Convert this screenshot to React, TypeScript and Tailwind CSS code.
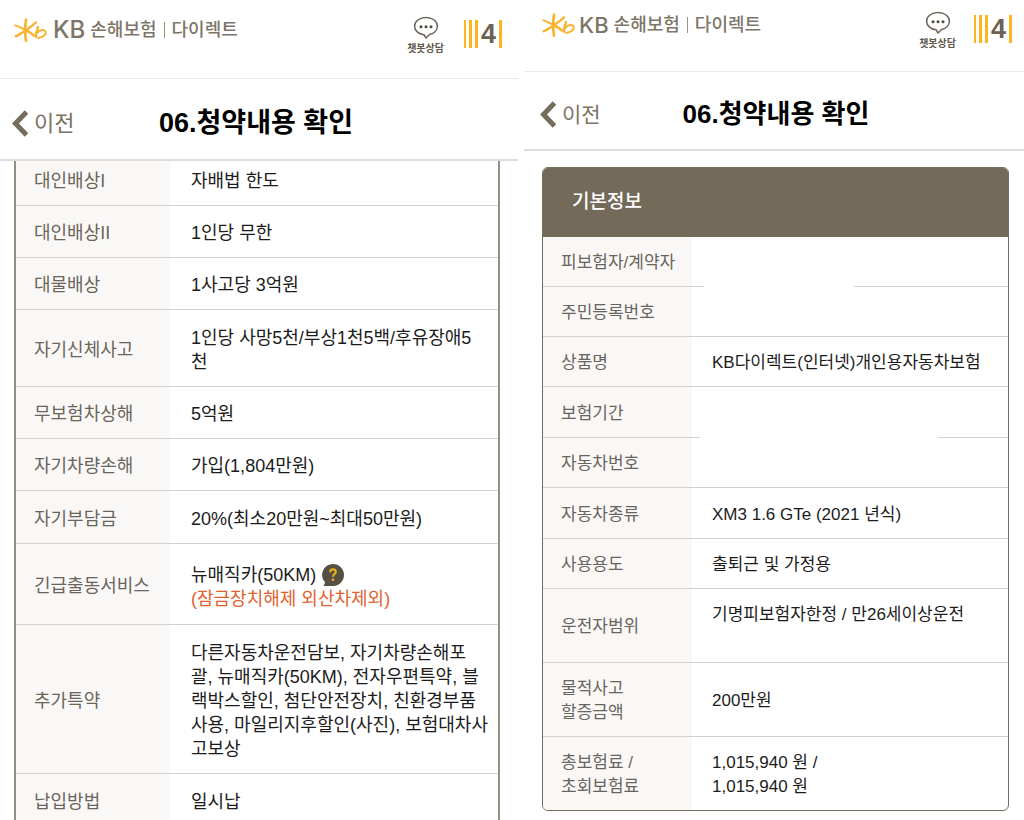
import React from 'react';
import clsx from 'clsx';

interface Row {
  label: React.ReactNode;
  value?: React.ReactNode;
  height: string;
  valueClass?: string;
  mask?: string;
}

const coverageRows: Row[] = [
  { label: '대인배상I', value: '자배법 한도', height: 'h-[52px]' },
  { label: '대인배상II', value: '1인당 무한', height: 'h-[52px]' },
  { label: '대물배상', value: '1사고당 3억원', height: 'h-[52px]' },
  {
    label: '자기신체사고',
    value: (
      <>
        1인당 사망5천/부상1천5백/후유장애5
        <br />천
      </>
    ),
    height: 'h-[77px]',
  },
  { label: '무보험차상해', value: '5억원', height: 'h-[52px]' },
  { label: '자기차량손해', value: '가입(1,804만원)', height: 'h-[52px]' },
  { label: '자기부담금', value: '20%(최소20만원~최대50만원)', height: 'h-[53px]' },
  {
    label: '긴급출동서비스',
    value: (
      <>
        <span className="flex items-center gap-1.5">
          뉴매직카(50KM)
          <HelpButton />
        </span>
        <span className="text-[#e2622f]">(잠금장치해제 외산차제외)</span>
      </>
    ),
    height: 'h-[81px]',
    valueClass: 'pt-1.5',
  },
  {
    label: '추가특약',
    value: (
      <>
        다른자동차운전담보, 자기차량손해포
        <br />
        괄, 뉴매직카(50KM), 전자우편특약, 블
        <br />
        랙박스할인, 첨단안전장치, 친환경부품
        <br />
        사용, 마일리지후할인(사진), 보험대차사
        <br />
        고보상
      </>
    ),
    height: 'h-[149px]',
  },
  { label: '납입방법', value: '일시납', height: 'h-[52px]' },
];

const basicRows: Row[] = [
  { label: '피보험자/계약자', height: 'h-[50px]', mask: 'left-3 w-[150px]' },
  { label: '주민등록번호', height: 'h-[50px]' },
  { label: '상품명', value: 'KB다이렉트(인터넷)개인용자동차보험', height: 'h-[50px]' },
  { label: '보험기간', height: 'h-[51px]', mask: 'left-2 w-[238px]' },
  { label: '자동차번호', height: 'h-[50px]' },
  { label: '자동차종류', value: 'XM3 1.6 GTe (2021 년식)', height: 'h-[51px]' },
  { label: '사용용도', value: '출퇴근 및 가정용', height: 'h-[50px]' },
  {
    label: '운전자범위',
    value: '기명피보험자한정 / 만26세이상운전',
    height: 'h-[74px]',
    valueClass: 'align-top pt-3.5',
  },
  {
    label: (
      <>
        물적사고
        <br />
        할증금액
      </>
    ),
    value: '200만원',
    height: 'h-[74px]',
  },
  {
    label: (
      <>
        총보험료 /<br />
        초회보험료
      </>
    ),
    value: (
      <>
        1,015,940 원 /<br />
        1,015,940 원
      </>
    ),
    height: 'h-[73px]',
  },
];

function HelpButton() {
  return (
    <button type="button" aria-label="도움말" className="-my-1 cursor-pointer">
      <svg width="22" height="22" viewBox="0 0 22 22" fill="none">
        <path d="M11 0a11 11 0 1 1 0 22H1.500l1.700-3.400A11 11 0 0 1 11 0z" fill="#565042" />
        <path
          d="M8.200 8.200C8.200 6.300 9.300 5.300 11 5.300s2.800 1 2.800 2.600c0 2.100-2.800 2.200-2.800 4.800"
          stroke="#f5b31c"
          strokeWidth="2"
        />
        <circle cx="11" cy="15.700" r="1.300" fill="#f5b31c" />
      </svg>
    </button>
  );
}

const StarMark: React.FC = () => (
  <svg width="33" height="24" viewBox="0 0 99 72" fill="none" stroke="#fab32f" strokeLinecap="round">
    <path d="M36 5C33 26 32 46 36 68" strokeWidth="8" />
    <path d="M4 22C16 26 28 32 38 38" strokeWidth="6" />
    <path d="M5 55C27 44 47 30 66 13" strokeWidth="7" />
    <path d="M38 38C46 42 54 47 60 53" strokeWidth="8" />
    <path d="M72 27C68 37 66 46 66 57" strokeWidth="7" />
    <path d="M69 45C78 34 93 33 95 41C97 50 86 58 73 60" strokeWidth="6" />
  </svg>
);

const ChatButton: React.FC = () => (
  <a href="#chat" className="flex flex-col items-center gap-0.5">
    <svg width="26" height="24" viewBox="0 0 26 24" fill="none">
      <path
        d="M13 1.500C6.500 1.500 1.600 5.300 1.600 10.300c0 4.300 4 7.800 9.400 8.400l2 3.300 3.600-3.500c4.600-1 7.800-4.300 7.800-8.200 0-5-4.900-8.800-11.400-8.800z"
        stroke="#6b6456"
        strokeWidth="1.500"
        strokeLinejoin="round"
      />
      <g fill="#4d473b">
        <circle cx="8" cy="10.700" r="1.500" />
        <circle cx="13" cy="10.700" r="1.500" />
        <circle cx="18" cy="10.700" r="1.500" />
      </g>
    </svg>
    <span className="text-[10px] leading-[13px] font-bold text-[#5f584b]">챗봇상담</span>
  </a>
);

const StepMark: React.FC = () => (
  <div className="flex h-7 items-center gap-[3px]">
    <i className="h-full w-[2px] bg-[#fbb51f]" />
    <i className="h-full w-[3px] bg-[#fbb51f]" />
    <i className="h-full w-[3px] bg-[#fbb51f]" />
    <span className="text-[27px] leading-7 font-bold text-[#6b6253]">4</span>
    <i className="h-full w-[3px] bg-[#fbb51f]" />
  </div>
);

const TopBar: React.FC<{ className: string; brandClass: string; actionsClass: string }> = ({
  className,
  brandClass,
  actionsClass,
}) => (
  <header className={clsx('flex items-start justify-between border-b border-[#e9e9e9]', className)}>
    <a href="#home" className="flex h-7 items-center text-[18px] font-medium text-[#7d7568]">
      <StarMark />
      <span className={clsx("font-['Inter']", brandClass)}>KB</span>
      <span className="ml-[5px]">손해보험</span>
      <i className="mx-[7px] h-4 w-px bg-[#9a9388]" />
      <span>다이렉트</span>
    </a>
    <div className={clsx('flex items-start', actionsClass)}>
      <ChatButton />
      <div className="pt-1">
        <StepMark />
      </div>
    </div>
  </header>
);

const TitleBar: React.FC<{ className: string; backClass: string; titleClass: string }> = ({
  className,
  backClass,
  titleClass,
}) => (
  <div className={clsx('grid grid-cols-[1fr_auto_1fr] items-center border-b-2 border-[#dedddb]', className)}>
    <button type="button" className={clsx('flex cursor-pointer items-center gap-1.5 text-[#7b7264]', backClass)}>
      <svg width="16" height="27" viewBox="0 0 16 27" fill="none" stroke="#766c5d" strokeWidth="5">
        <path d="M14.500 2L3.500 13.500L14.500 25" />
      </svg>
      이전
    </button>
    <h1 className={clsx('font-bold text-black', titleClass)}>06.청약내용 확인</h1>
  </div>
);

const InfoTable: React.FC<{ rows: Row[]; labelClass: string; valueClass: string; className: string }> = ({
  rows,
  labelClass,
  valueClass,
  className,
}) => (
  <table className={clsx('w-full table-fixed border-separate border-spacing-0 leading-6', className)}>
    <tbody>
      {rows.map((row, index) => {
        const line = index < rows.length - 1 && 'border-b border-[#d3d2cf]';
        return (
          <tr key={index}>
            <th
              scope="row"
              className={clsx('bg-[#faf8f6] pt-[3px] text-left font-normal whitespace-nowrap text-[#6a655b]', labelClass, row.height, line)}
            >
              {row.label}
            </th>
            <td className={clsx('relative whitespace-nowrap text-[#1c1c1c]', valueClass, row.valueClass ?? 'pt-[3px]', line)}>
              {row.value}
              {row.mask && <span className={clsx('absolute -bottom-px h-2 bg-white', row.mask)} />}
            </td>
          </tr>
        );
      })}
    </tbody>
  </table>
);

const App: React.FC = () => {
  return (
    <main
      lang="ko"
      className="grid h-screen grid-cols-[518fr_500fr] gap-1.5 overflow-hidden bg-white font-['Liberation_Sans','Noto_Sans_CJK_KR',sans-serif]"
    >
      {/* Coverage details */}
      <section className="flex min-w-0 flex-col overflow-hidden">
        <TopBar
          className="h-[79px] shrink-0 pt-4 pr-4 pl-3.5"
          brandClass="ml-1.5 text-[24px]"
          actionsClass="gap-5"
        />
        <TitleBar className="h-[82px] shrink-0 pt-2 pr-[18px] pl-3" backClass="text-[22px]" titleClass="text-[27px]" />
        <div className="mr-[18px] ml-3.5 min-h-0 flex-1 overflow-hidden border-x-2 border-[#968e82]">
          <InfoTable
            rows={coverageRows}
            className="-mt-[7px] text-[18px]"
            labelClass="w-[154px] pl-[18px]"
            valueClass="pl-[21px]"
          />
        </div>
      </section>

      {/* Contract summary */}
      <section className="min-w-0">
        <TopBar
          className="h-[72px] pt-[11px] pr-3 pl-[18px]"
          brandClass="ml-1 text-[22px]"
          actionsClass="gap-[18px]"
        />
        <TitleBar className="h-[79px] pt-2 pr-3 pl-4" backClass="text-[21px]" titleClass="text-[26px]" />
        <div className="mt-4 mr-[15px] ml-[18px] overflow-hidden rounded-md border border-[#766c5d]">
          <h2 className="flex h-[69px] items-center bg-[#736a5a] pl-[29px] text-[19px] font-medium text-white">
            기본정보
          </h2>
          <InfoTable
            rows={basicRows}
            className="text-[17px]"
            labelClass="w-[149px] pl-[18px]"
            valueClass="pl-5"
          />
        </div>
      </section>
    </main>
  );
};

export default App;
